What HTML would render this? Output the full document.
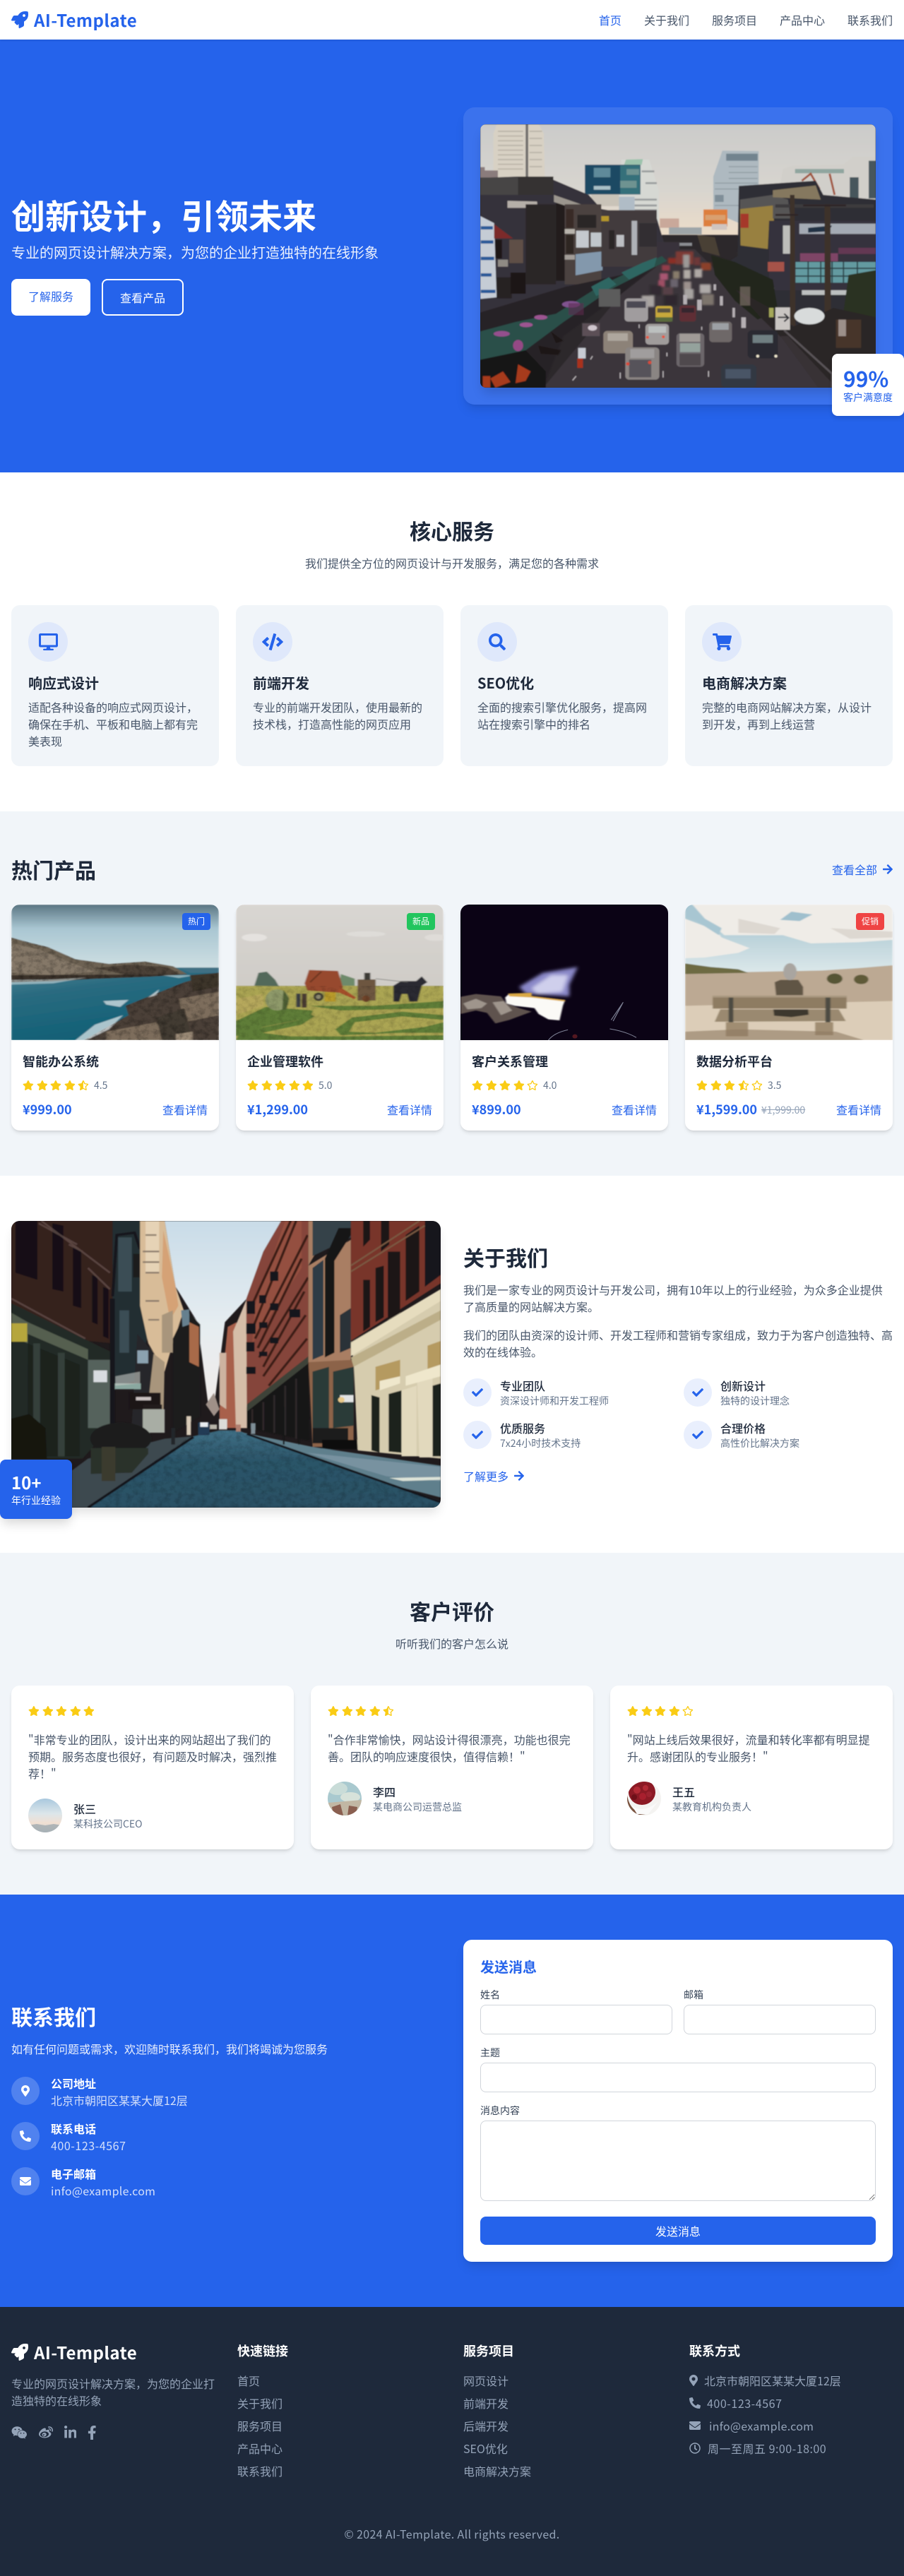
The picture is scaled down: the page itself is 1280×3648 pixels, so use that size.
<!DOCTYPE html>
<html lang="zh-CN"><head><meta charset="utf-8"><title>AI-Template</title>
<style>
*{box-sizing:border-box;margin:0;padding:0}
html,body{width:1280px;background:#fff}
body{height:3648px;overflow:hidden;position:relative;font-family:"Noto Sans CJK SC","Liberation Sans",sans-serif;font-size:16px;line-height:24px;color:#1e293b}
svg{display:block}
.ic{display:inline-block;fill:currentColor;flex:none}
section,header,footer{position:absolute;left:0;width:1280px}
.abs{position:absolute}
header{top:0;height:56px;background:#fff;box-shadow:0 1px 3px rgba(0,0,0,.12);z-index:5}
.logo{position:absolute;left:16px;top:10px;height:36px;display:flex;align-items:center;font-size:24px;line-height:36px;font-weight:700;color:#2563eb;letter-spacing:.45px}
.logo svg{width:24px;height:24px;margin-right:8px}
nav{position:absolute;right:16px;top:16px;display:flex;gap:32px;color:#475569}
.hero{top:56px;height:613px;background:#2563eb;color:#fff}
h1{position:absolute;left:16px;top:223px;font-size:48px;line-height:48px;font-weight:700}
.hero p{position:absolute;left:16px;top:287px;font-size:20px;line-height:28px;opacity:.9}
.btn{position:absolute;top:339px;height:52px;border-radius:8px}
.panel{position:absolute;left:656px;top:96px;width:608px;height:421px;background:rgba(255,255,255,.1);border-radius:16px;box-shadow:0 10px 15px -3px rgba(0,0,0,.1),0 4px 6px -4px rgba(0,0,0,.1)}
.pimg{position:absolute;left:24px;top:24px;width:560px;height:373px;border-radius:8px;overflow:hidden;box-shadow:0 10px 15px -3px rgba(0,0,0,.15)}
.pimg svg,.pi svg,.ai svg,.av svg{width:100%;height:100%}
.sat{position:absolute;left:1178px;top:445px;width:102px;height:88px;background:#fff;border-radius:8px;padding:16px;box-shadow:0 4px 6px rgba(0,0,0,.1);color:#2563eb;white-space:nowrap}
.sat b{display:block;font-size:30px;line-height:36px}
.sat span{display:block;font-size:14px;line-height:20px}
.st{position:absolute;left:0;width:1280px;text-align:center;font-size:30px;line-height:36px;font-weight:700}
.ss{position:absolute;left:0;width:1280px;text-align:center;color:#475569}
.serv{top:669px;height:480px;background:#fff}
.sc{position:absolute;top:188px;width:294px;height:228px;background:#f1f5f9;border-radius:12px}
.si{position:absolute;left:24px;top:24px;width:56px;height:56px;border-radius:50%;background:#dfe8fb;color:#2563eb;display:flex;align-items:center;justify-content:center}
.sc h3{position:absolute;left:24px;top:96px;font-size:20px;line-height:28px;font-weight:700}
.sc p{position:absolute;left:24px;top:132px;width:246px;font-size:16px;line-height:24px;color:#475569}
.prod{top:1149px;height:516px;background:#f1f5f9}
.pc{position:absolute;top:132px;width:294px;height:320px;background:#fff;border-radius:12px;overflow:hidden;box-shadow:0 4px 6px -1px rgba(0,0,0,.1),0 2px 4px -2px rgba(0,0,0,.1)}
.pi{position:absolute;left:0;top:0;width:294px;height:192px}
.tag{position:absolute;right:12px;top:12px;width:40px;height:24px;border-radius:4px;color:#fff;font-size:12px;line-height:24px;text-align:center}
.pc h3{position:absolute;left:16px;top:208px;font-size:18px;line-height:28px;font-weight:600;color:#1e293b}
.rate{position:absolute;left:16px;top:244px;height:24px;display:flex;align-items:center;color:#facc15;fill:#facc15}
.rate svg{height:14px;margin-right:3.85px;fill:#facc15}
.rate i{font-style:normal;color:#64748b;font-size:14px;margin-left:3px;line-height:24px}
.pr{position:absolute;left:16px;top:276px;font-size:18px;line-height:28px;font-weight:700;color:#2563eb}
.old{position:absolute;left:108px;top:279px;font-size:14px;line-height:24px;color:#94a3b8;text-decoration:line-through}
.dt{position:absolute;right:16px;top:278px;color:#2563eb}
.about{top:1665px;height:534px;background:#fff}
.ai{position:absolute;left:16px;top:64px;width:608px;height:406px;border-radius:12px;overflow:hidden;box-shadow:0 10px 15px -3px rgba(0,0,0,.12)}
.yr{position:absolute;left:0;top:402px;width:102px;height:84px;background:#2563eb;color:#fff;border-radius:8px;padding:16px;white-space:nowrap;box-shadow:0 10px 15px -3px rgba(0,0,0,.15)}
.yr b{display:block;font-size:24px;line-height:32px}
.yr span{display:block;font-size:14px;line-height:20px}
.about h2{position:absolute;left:656px;top:97px;font-size:30px;line-height:36px;font-weight:700}
.ap{position:absolute;left:656px;width:608px;color:#475569}
.ft{position:absolute;width:280px;height:44px}
.ft u{position:absolute;left:0;top:2px;width:40px;height:40px;border-radius:50%;background:#e9effd;color:#2563eb;display:flex;align-items:center;justify-content:center}
.ft b{position:absolute;left:52px;top:0;font-weight:500;white-space:nowrap}
.ft span{position:absolute;left:52px;top:24px;font-size:14px;line-height:20px;color:#64748b;white-space:nowrap}
.lnk{position:absolute;display:flex;align-items:center;color:#2563eb}
.lnk svg{margin-left:8px}
.tes{top:2199px;height:484px;background:#f1f5f9}
.tc{position:absolute;top:188px;width:400px;height:232px;background:#fff;border-radius:12px;box-shadow:0 4px 6px -1px rgba(0,0,0,.1),0 2px 4px -2px rgba(0,0,0,.1)}
.tc .rate{left:24px;top:24px}
.tc p{position:absolute;left:24px;top:64px;width:352px;color:#475569}
.av{position:absolute;left:24px;width:48px;height:48px;border-radius:50%;overflow:hidden}
.tc b{position:absolute;left:88px;font-weight:500;white-space:nowrap}
.tc span{position:absolute;left:88px;font-size:14px;line-height:20px;color:#64748b;white-space:nowrap}
.con{top:2683px;height:584px;background:#2563eb;color:#fff}
.con h2{position:absolute;left:16px;top:154px;font-size:30px;line-height:36px;font-weight:700}
.ci{position:absolute;left:16px;width:40px;height:40px;border-radius:50%;background:rgba(255,255,255,.2);display:flex;align-items:center;justify-content:center}
.cb{position:absolute;left:72px;font-weight:600;white-space:nowrap}
.cv{position:absolute;left:72px;opacity:.8;white-space:nowrap}
.form{position:absolute;left:656px;top:64px;width:608px;height:456px;background:#fff;border-radius:12px;box-shadow:0 10px 15px -3px rgba(0,0,0,.1),0 4px 6px -4px rgba(0,0,0,.1);color:#334155}
.form h3{position:absolute;left:24px;top:24px;font-size:20px;line-height:28px;font-weight:700;color:#2563eb}
.form label{position:absolute;font-size:14px;line-height:20px}
.form input,.form textarea{position:absolute;display:block;border:1px solid #d1d5db;border-radius:8px;background:#fff;outline:0;font:inherit}
.form .go{position:absolute;left:24px;top:392px;width:560px;height:40px;background:#2563eb;border-radius:8px;color:#fff;text-align:center;line-height:40px}
footer{top:3267px;height:381px;background:#1e293b;color:#94a3b8}
footer h4{position:absolute;top:48px;font-size:18px;line-height:28px;font-weight:700;color:#fff}
.fl{position:absolute;top:92px;list-style:none}
.fl li{height:32px;white-space:nowrap;display:flex;align-items:flex-start}
.fl li svg{margin-top:4px}
</style></head><body>
<svg width="0" height="0" style="position:absolute"><defs>
<symbol id="rocket" viewBox="0 0 512 512"><path d="M505.12 19.09c-1.19-5.53-6.66-11-12.21-12.19C460.72 0 435.51 0 410.41 0 307.18 0 245.27 55.2 199.05 128H94.84c-16.35.02-35.56 11.88-42.89 26.48L2.52 253.3A28.4 28.4 0 0 0 0 264a24 24 0 0 0 24 24h103.81l-22.47 22.47c-11.37 11.36-13 32.26 0 45.25l50.91 50.91c11.16 11.19 32.16 13.16 45.28 0l22.47-22.47V488a24 24 0 0 0 24 24 28.56 28.56 0 0 0 10.71-2.52l98.73-49.39c14.63-7.3 26.51-26.5 26.51-42.86V312.8c72.6-46.31 128.03-108.41 128.03-211.09.03-25.21.03-50.41-6.88-82.62zM384.04 168a40 40 0 1 1 40.01-40 40 40 0 0 1-40.01 40z"/></symbol>
<symbol id="s" viewBox="0 0 576 512"><path d="M259.3 17.8L194 150.2 47.9 171.5c-26.2 3.8-36.7 36.1-17.7 54.6l105.7 103-25 145.5c-4.5 26.3 23.2 46 46.4 33.7L288 439.6l130.7 68.7c23.2 12.2 50.9-7.4 46.4-33.7l-25-145.5 105.7-103c19-18.5 8.5-50.8-17.7-54.6L382 150.2 316.7 17.8c-11.7-23.6-45.6-23.9-57.4 0z"/></symbol>
<symbol id="h" viewBox="0 0 536 512"><path d="M508.55 171.51L362.18 150.2 296.77 17.81C290.89 5.98 279.42 0 267.95 0c-11.4 0-22.79 5.9-28.69 17.81l-65.43 132.38-146.38 21.29c-26.25 3.8-36.77 36.09-17.74 54.59l105.89 103-25.06 145.48C86.98 495.33 103.57 512 122.15 512c4.93 0 10-1.17 14.87-3.75l130.95-68.68 130.94 68.7c4.86 2.55 9.92 3.71 14.83 3.71 18.6 0 35.22-16.61 31.66-37.4l-25.03-145.49 105.91-102.98c19.04-18.5 8.52-50.8-17.73-54.6zm-121.74 123.2l-18.12 17.62 4.28 24.88 19.52 113.45-102.13-53.59-22.38-11.74.03-317.19 51.03 103.29 11.18 22.63 25.01 3.64 114.23 16.63-82.65 80.38z"/></symbol>
<symbol id="e" viewBox="0 0 576 512"><path d="M528.1 171.5L382 150.2 316.7 17.8c-11.7-23.6-45.6-23.9-57.4 0L194 150.2 47.9 171.5c-26.2 3.8-36.7 36.1-17.7 54.6l105.7 103-25 145.5c-4.5 26.3 23.2 46 46.4 33.7L288 439.6l130.7 68.7c23.2 12.2 50.9-7.4 46.4-33.7l-25-145.5 105.7-103c19.1-18.5 8.6-50.8-17.7-54.6zM388.6 312.3l23.7 138.4L288 385.4l-124.3 65.3 23.7-138.4-100.6-98 139-20.2 62.2-126 62.2 126 139 20.2-100.6 98z"/></symbol>
<symbol id="ar" viewBox="0 0 448 512"><path d="M190.5 66.9l22.2-22.2c9.4-9.4 24.6-9.4 33.9 0L441 239c9.4 9.4 9.4 24.6 0 33.9L246.6 467.3c-9.4 9.4-24.6 9.4-33.9 0l-22.2-22.2c-9.5-9.5-9.3-25 .4-34.3L311.4 296H24c-13.3 0-24-10.7-24-24v-32c0-13.3 10.7-24 24-24h287.4L190.9 101.2c-9.8-9.3-10-24.8-.4-34.3z"/></symbol>
<symbol id="ck" viewBox="0 0 512 512"><path d="M173.9 439.4l-166.4-166.4c-10-10-10-26.2 0-36.2l36.2-36.2c10-10 26.2-10 36.2 0L192 312.69 432.1 72.6c10-10 26.2-10 36.2 0l36.2 36.2c10 10 10 26.2 0 36.2l-294.4 294.4c-10 10-26.2 10-36.2 0z"/></symbol>
<symbol id="pin" viewBox="0 0 384 512"><path d="M172.27 501.67C26.97 291.03 0 269.41 0 192 0 85.96 85.96 0 192 0s192 85.96 192 192c0 77.41-26.97 99.03-172.27 309.67-9.53 13.77-29.93 13.77-39.46 0zM192 272c44.18 0 80-35.82 80-80s-35.82-80-80-80-80 35.82-80 80 35.82 80 80 80z"/></symbol>
<symbol id="ph" viewBox="0 0 512 512"><path d="M497.39 361.8l-112-48a24 24 0 0 0-28 6.9l-49.6 60.6A370.66 370.66 0 0 1 130.6 204.11l60.6-49.6a23.94 23.94 0 0 0 6.9-28l-48-112A24.16 24.16 0 0 0 122.6.61l-104 24A24 24 0 0 0 0 48c0 256.5 207.9 464 464 464a24 24 0 0 0 23.4-18.6l24-104a24.29 24.29 0 0 0-14.01-27.6z"/></symbol>
<symbol id="env" viewBox="0 0 512 512"><path d="M502.3 190.8c3.9-3.1 9.7-.2 9.7 4.7V400c0 26.5-21.5 48-48 48H48c-26.5 0-48-21.5-48-48V195.6c0-5 5.7-7.8 9.7-4.7 22.4 17.4 52.1 39.5 154.1 113.6 21.1 15.4 56.7 47.8 92.2 47.6 35.7.3 72-32.8 92.3-47.6 102-74.1 131.6-96.3 154-113.7zM256 320c23.2.4 56.6-29.2 73.4-41.4 132.7-96.3 142.8-104.7 173.4-128.7 5.8-4.5 9.2-11.5 9.2-18.9v-19c0-26.5-21.5-48-48-48H48C21.5 64 0 85.5 0 112v19c0 7.4 3.4 14.3 9.2 18.9 30.6 23.9 40.7 32.4 173.4 128.7 16.8 12.2 50.2 41.8 73.4 41.4z"/></symbol>
<filter id="b1" x="-5%" y="-5%" width="110%" height="110%"><feGaussianBlur stdDeviation="2.4"/></filter>
<filter id="b2" x="-5%" y="-5%" width="110%" height="110%"><feGaussianBlur stdDeviation="3.4"/></filter>
<filter id="b3" x="-20%" y="-20%" width="140%" height="140%"><feGaussianBlur stdDeviation="7"/></filter>
<filter id="tx" x="0" y="0" width="100%" height="100%"><feTurbulence type="fractalNoise" baseFrequency=".045" numOctaves="4" seed="4"/><feColorMatrix values="0 0 0 0 0 0 0 0 0 0 0 0 0 0 0 0 0 0 2 -.8"/><feComposite in2="SourceAlpha" operator="in"/></filter>
<linearGradient id="g1" x1="0" y1="0" x2="0" y2="1"><stop offset="0" stop-color="#cbcbca"/><stop offset=".6" stop-color="#d8d5cf"/><stop offset="1" stop-color="#ecdcc8"/></linearGradient>
<linearGradient id="g2" x1="0" y1="0" x2="0" y2="1"><stop offset="0" stop-color="#c9dce8"/><stop offset=".55" stop-color="#e6edf1"/><stop offset="1" stop-color="#f2ecea"/></linearGradient>
<linearGradient id="g3" x1="0" y1="0" x2="0" y2="1"><stop offset="0" stop-color="#3f6f85"/><stop offset=".4" stop-color="#2b5468"/><stop offset="1" stop-color="#2a5064"/></linearGradient>
<linearGradient id="g4" x1="0" y1="0" x2="0" y2="1"><stop offset="0" stop-color="#5b7683"/><stop offset=".35" stop-color="#a9c6d2"/><stop offset="1" stop-color="#d3e2e5"/></linearGradient>
<linearGradient id="g5" x1="0" y1="0" x2=".4" y2="1"><stop offset="0" stop-color="#4f8596"/><stop offset=".35" stop-color="#2a6b80"/><stop offset="1" stop-color="#0f5f75"/></linearGradient>
<linearGradient id="g6" x1="0" y1="0" x2="0" y2="1"><stop offset="0" stop-color="#d9d6d2"/><stop offset="1" stop-color="#cfccc7"/></linearGradient>
<linearGradient id="g7" x1="0" y1="0" x2="0" y2="1"><stop offset="0" stop-color="#9dbfcc"/><stop offset="1" stop-color="#dce8ea"/></linearGradient>
</defs></svg>

<header>
<div class="logo"><svg class="ic"><use href="#rocket"/></svg>AI-Template</div>
<nav><span style="color:#2563eb">首页</span><span>关于我们</span><span>服务项目</span><span>产品中心</span><span>联系我们</span></nav>
</header>

<section class="hero">
<h1>创新设计，引领未来</h1>
<p>专业的网页设计解决方案，为您的企业打造独特的在线形象</p>
<div class="btn" style="left:16px;width:112px;background:#fff;color:#2563eb;padding:12px 24px">了解服务</div>
<div class="btn" style="left:144px;width:116px;border:2px solid #fff;padding:12px 24px">查看产品</div>
<div class="panel"><div class="pimg">
<svg viewBox="0 0 1568 1119" preserveAspectRatio="none"><rect width="1568" height="1119" fill="#2c282b"/><g filter="url(#b1)">
<rect width="1568" height="470" fill="url(#g1)"/>
<path d="M52 40 66 0H232L252 40 256 235H52Z" fill="#d8d1c4"/>
<path d="M70 30H170M70 50H170M70 70H170M70 90H170M70 110H170M70 130H170M70 150H170M70 170H170M70 190H170M195 30H245M195 60H245M195 90H245M195 120H245M195 150H245M195 180H245" stroke="#b9b2a6" stroke-width="5"/>
<rect x="180" y="0" width="10" height="225" fill="#6f6d6c"/>
<path d="M0 182H18V228H0ZM18 196H70V228H18Z" fill="#8a7c7c"/>
<path d="M560 150 670 150 708 280 708 420 600 400 550 300Z" fill="#d6d8d3"/>
<path d="M612 320H700M612 345H700M612 365H700M640 200H690M655 250H700" stroke="#6f7378" stroke-width="8" opacity=".6"/>
<path d="M578 150 645 148 640 172H570Z" fill="#9cc3ac"/>
<rect x="415" y="172" width="220" height="126" fill="#1e4a63"/>
<rect x="555" y="175" width="78" height="122" fill="#35707a"/><rect x="450" y="185" width="66" height="40" fill="#5f8a9a"/><rect x="450" y="262" width="66" height="16" fill="#a9c0c7"/>
<path d="M580 190H630V215H580ZM555 240H620V270H555Z" fill="#a8b5a8" opacity=".5"/>
<rect x="440" y="298" width="110" height="50" fill="#c9c3b8"/>
<rect x="550" y="308" width="62" height="60" fill="#b0bcc6"/>
<path d="M712 400H788V440H712Z" fill="#c9a89a"/>
<rect x="748" y="438" width="130" height="30" fill="#9ea5a8"/>
<rect x="770" y="503" width="70" height="14" fill="#8a8d92"/>
<path d="M924 222 960 112 1104 114 1104 262 1030 262 1026 420 924 372Z" fill="#aeb9c0"/>
<path d="M975 125H1100V155H975Z" fill="#72838e"/><path d="M930 300H965V330H930Z" fill="#7f8e98"/>
<path d="M930 250H1100M930 275H1040M930 345H1026M985 180H1100M985 205H1100M985 230H1100" stroke="#8e9ba3" stroke-width="4"/>
<path d="M1190 250 1200 190 1240 175 1440 170 1480 137 1568 137 1568 330 1190 330Z" fill="#d1cfca"/>
<path d="M1248 190H1442V208H1248Z" fill="#8fa59f"/><path d="M1540 155H1568V315H1540ZM1465 225H1500V315H1465Z" fill="#47565c"/>
<path d="M1275 240 1310 210 1345 275M1385 210 1405 300" stroke="#a0523a" stroke-width="8" fill="none"/>
<path d="M1025 262 1120 255 1330 240 1360 300 1568 320 1568 1119 1100 1119 1000 700 900 640 1020 560Z" fill="#2f2d34"/>
<path d="M1030 360 1160 340 1165 420 1145 420 1140 530 1032 515Z" fill="#98803f"/>
<path d="M1030 320 1160 300 1220 320 1230 400 1160 400 1160 345 1030 360Z" fill="#565555"/>
<path d="M1160 280 1330 260 1350 320 1160 310Z" fill="#85785e"/>
<rect x="1032" y="380" width="32" height="60" fill="#a5392c"/>
<rect x="1145" y="410" width="423" height="295" fill="#36313c"/>
<rect x="1265" y="422" width="303" height="44" fill="#a4aab4"/>
<path d="M1300 440 1395 430 1380 455 1300 460Z" fill="#243245"/>
<rect x="1200" y="430" width="28" height="120" fill="#bdbdba"/>
<rect x="1268" y="548" width="150" height="34" fill="#7e4466"/><rect x="1420" y="525" width="148" height="26" fill="#633852"/>
<rect x="1250" y="585" width="318" height="88" fill="#639aa0"/>
<path d="M1300 585V673M1350 585V673M1395 585V673M1440 585V673M1495 585V673M1250 612H1568M1250 645H1568" stroke="#2b4045" stroke-width="5"/>
<rect x="1140" y="585" width="65" height="40" fill="#a5524a"/>
<rect x="1275" y="705" width="200" height="20" fill="#bdc0c0"/>
<path d="M1460 640 1568 620 1568 860 1440 800Z" fill="#2a3021"/>
<rect x="1170" y="340" width="390" height="14" fill="#3c3a3e"/>
<path d="M1365 340H1388L1392 1020 1365 1000ZM1228 300H1246L1250 860 1228 850Z" fill="#3e302b"/>
<path d="M1280 345H1450M1170 385H1260" stroke="#2d2628" stroke-width="8"/>
<rect x="1140" y="695" width="26" height="44" fill="#a8b8a8"/>
<rect x="885" y="362" width="95" height="72" fill="#dd7f3c"/><rect x="892" y="385" width="80" height="22" fill="#d9a070"/>
<rect x="918" y="424" width="60" height="24" fill="#cfc5c0"/>
<path d="M0 228 150 222 290 236 430 300 480 360 700 400 745 560 560 640 340 690 0 800Z" fill="#36303a"/>
<path d="M0 226H150V300H0Z" fill="#464444"/><path d="M150 222H290V300H150Z" fill="#363333"/>
<path d="M108 325 225 328 228 355 108 355Z" fill="#b5afa8"/>
<path d="M0 390 55 420 65 735 0 742Z" fill="#c5ccd5"/>
<path d="M2 440H50M2 500H52M2 570H55M2 640H45M2 710H60" stroke="#2a5a98" stroke-width="14"/>
<path d="M55 425 130 485H55Z" fill="#7b2b2b"/>
<rect x="60" y="490" width="26" height="80" fill="#1a1515"/><rect x="115" y="490" width="55" height="100" fill="#5f4f46"/><rect x="65" y="650" width="60" height="90" fill="#262022"/><rect x="120" y="630" width="60" height="90" fill="#1c1819"/><rect x="70" y="575" width="40" height="30" fill="#8f8a84"/>
<rect x="180" y="340" width="120" height="340" fill="#2a2628"/><rect x="300" y="335" width="35" height="330" fill="#201c1f"/>
<path d="M292 300 480 370 480 400 335 345 292 330Z" fill="#9b968e"/>
<rect x="335" y="340" width="145" height="340" fill="#4c4240"/>
<rect x="335" y="445" width="40" height="20" fill="#b8b3ac"/><rect x="335" y="555" width="40" height="20" fill="#a39d98"/>
<rect x="340" y="360" width="30" height="80" fill="#382a27"/><rect x="340" y="470" width="30" height="80" fill="#2f2523"/><rect x="385" y="385" width="75" height="55" fill="#2a2628"/>
<rect x="380" y="452" width="50" height="72" fill="#c5c9ce"/><rect x="438" y="460" width="44" height="60" fill="#c0c6cb"/><path d="M378 552 485 540 485 620 378 642Z" fill="#8398ac"/>
<rect x="480" y="365" width="220" height="240" fill="#423b3c"/><rect x="540" y="470" width="30" height="50" fill="#bdbfc3"/><rect x="600" y="410" width="22" height="145" fill="#aeb1b6"/><rect x="480" y="390" width="30" height="22" fill="#b5962a"/><rect x="510" y="450" width="22" height="80" fill="#2a2628"/><rect x="630" y="420" width="70" height="100" fill="#332e30"/>
<path d="M700 500 790 500 790 560 700 600Z" fill="#38323a"/><path d="M860 470 930 480 950 560 880 540Z" fill="#4a3f34"/>
<path d="M790 530 850 530 1000 690 1400 1119 250 1119 560 720Z" fill="#3a343a"/>
<path d="M0 800 340 690 560 640 730 570 560 720 330 900 250 1119H0Z" fill="#262125"/>
<path d="M915 555 1010 585 1160 660 1180 790 1100 830 1010 750 930 640Z" fill="#23251e"/>
<path d="M1010 700 1120 830 1400 1119 1568 1119 1568 820 1400 780 1240 860 1180 800Z" fill="#2a2525"/>
<path d="M1220 900 1395 1100 1395 1119 1340 1119 1190 900Z" fill="#383335"/><path d="M1205 875 1395 1060 1395 1119" stroke="#5a5558" stroke-width="8" fill="none"/>
<rect x="1170" y="778" width="58" height="95" fill="#c9c5c2"/><path d="M1180 820H1220M1205 805 1222 822 1205 838" stroke="#2c2c30" stroke-width="6" fill="none"/>
<ellipse cx="1305" cy="815" rx="60" ry="35" fill="#d8dbdb"/><rect x="1410" y="830" width="100" height="120" fill="#5c4030" opacity=".6"/>
<path d="M0 880 140 840 300 805 470 690 720 560 740 580 520 700 330 840 180 960 0 1010Z" fill="#2a4f4a"/>
<path d="M560 630 640 590 700 565 690 605 590 660ZM440 690 510 650 540 680 460 730Z" fill="#2f6662"/>
<ellipse cx="85" cy="890" rx="32" ry="12" fill="#94508e"/><ellipse cx="182" cy="852" rx="26" ry="10" fill="#9c5491"/><ellipse cx="240" cy="820" rx="26" ry="10" fill="#9c5491"/><ellipse cx="150" cy="940" rx="20" ry="24" fill="#944a85"/><ellipse cx="360" cy="765" rx="36" ry="14" fill="#80528f"/>
<rect x="350" y="760" width="60" height="50" fill="#5d2c50" opacity=".6"/>
<path d="M0 1000 180 960 260 1050 260 1119H0Z" fill="#181417"/>
<path d="M40 1080 90 1050 120 1095 60 1119ZM150 1020 200 1050 180 1090 140 1100ZM10 1070H40V1119H10Z" fill="#a63a1c"/>
<path d="M230 940 320 960 310 980 240 975ZM280 880 330 920 300 930Z" fill="#1e1719"/>
<rect x="388" y="950" width="30" height="45" fill="#c7cbd3"/><rect x="385" y="995" width="22" height="40" fill="#a9301f"/>
<rect x="404" y="845" width="70" height="55" fill="#5c5056"/><ellipse cx="445" cy="865" rx="18" ry="12" fill="#d0c6cd"/>
<rect x="470" y="700" width="85" height="75" fill="#5c5c5c"/>
<g filter="url(#b2)" opacity=".8">
<rect x="775" y="540" width="70" height="55" fill="#8f3d36"/><rect x="805" y="555" width="24" height="55" fill="#b5b3af"/><rect x="745" y="568" width="30" height="24" fill="#a02d24"/><rect x="848" y="565" width="24" height="34" fill="#7a3838"/><rect x="875" y="588" width="40" height="32" fill="#a04426"/>
<rect x="720" y="598" width="32" height="24" fill="#a84050"/><rect x="712" y="633" width="32" height="28" fill="#c56080"/><rect x="764" y="624" width="26" height="32" fill="#9c8f78"/><rect x="806" y="618" width="28" height="38" fill="#cfc9c0"/><rect x="849" y="615" width="30" height="36" fill="#cdc6bf"/><rect x="754" y="658" width="30" height="34" fill="#77707a"/><rect x="806" y="668" width="30" height="34" fill="#b5a9a2"/><rect x="706" y="662" width="26" height="28" fill="#b9566f"/>
<rect x="672" y="684" width="46" height="42" fill="#2d2a2e"/><rect x="724" y="692" width="40" height="32" fill="#5e4548"/><rect x="808" y="700" width="38" height="42" fill="#c3bfbb"/><rect x="870" y="680" width="44" height="38" fill="#ccc8c4"/><rect x="640" y="728" width="50" height="48" fill="#c5c0bb"/><rect x="728" y="724" width="54" height="46" fill="#2a282c"/><rect x="878" y="722" width="48" height="46" fill="#8e857a"/>
</g>
<rect x="572" y="740" width="93" height="98" rx="14" fill="#a09c9e"/><rect x="580" y="752" width="76" height="28" fill="#4c4a52"/>
<rect x="695" y="772" width="67" height="66" rx="10" fill="#c7a83a"/><rect x="702" y="782" width="52" height="18" fill="#5a5340"/><rect x="695" y="820" width="67" height="18" fill="#586a3c"/>
<rect x="790" y="770" width="65" height="68" rx="10" fill="#5e2f34"/><rect x="798" y="780" width="50" height="20" fill="#35282e"/>
<rect x="908" y="838" width="90" height="88" rx="14" fill="#6e6868"/><rect x="920" y="845" width="65" height="28" fill="#9da0a4"/>
<rect x="655" y="848" width="93" height="88" rx="14" fill="#a09c9b"/><rect x="667" y="858" width="70" height="28" fill="#bcc0bf"/><circle cx="663" cy="905" r="6" fill="#e6523c"/><circle cx="726" cy="903" r="6" fill="#e6523c"/>
<rect x="488" y="878" width="117" height="95" rx="16" fill="#8c8278"/><rect x="505" y="888" width="80" height="32" fill="#aea79e"/>
<rect x="778" y="888" width="110" height="142" rx="14" fill="#6c666a"/><rect x="792" y="930" width="80" height="38" fill="#94a29c"/><rect x="790" y="890" width="82" height="34" fill="#a09b97"/><rect x="790" y="975" width="84" height="50" fill="#4f4a4e"/>
<rect x="575" y="948" width="135" height="137" rx="16" fill="#8a8583"/><rect x="595" y="955" width="95" height="38" fill="#a09d9d"/><rect x="590" y="1000" width="88" height="75" fill="#56525a"/><circle cx="585" cy="1018" r="7" fill="#d94a38"/><circle cx="672" cy="1012" r="7" fill="#d94a38"/>
<rect x="1060" y="875" width="120" height="120" rx="18" fill="#2a2b33"/><rect x="1080" y="895" width="80" height="34" fill="#6f7f82"/><circle cx="1100" cy="985" r="6" fill="#f0e8d0"/><circle cx="1172" cy="985" r="6" fill="#f0e8d0"/>
<rect x="955" y="1020" width="140" height="99" rx="18" fill="#333843"/><rect x="972" y="1040" width="100" height="40" fill="#4a5566"/>
<path d="M1000 780h10v40h-10zM1035 820h18v45h-18zM950 730h12v40h-12zM860 745h18v45h-18zM805 725h15v40h-15zM925 680h10v25h-10z" fill="#b5afb3"/>
<path d="M725 1048v28M555 1055v25M905 1048v25M740 970v16M630 850v16M878 860v14M445 985l-8 14M380 1070l-14 18" stroke="#bfbabd" stroke-width="4"/>
<rect x="1030" y="690" width="40" height="80" fill="#b8a898" opacity=".4"/>
<rect x="1145" y="780" width="18" height="40" fill="#a5a85a"/>
<rect x="1420" y="830" width="30" height="70" fill="#c0b8b4" opacity=".7"/>
</g></svg>
</div></div>
<div class="sat"><b>99%</b><span>客户满意度</span></div>
</section>

<section class="serv">
<div class="st" style="top:64px">核心服务</div>
<div class="ss" style="top:116px">我们提供全方位的网页设计与开发服务，满足您的各种需求</div>
<div class="sc" style="left:16px"><div class="si"><svg class="ic" width="27" height="24" viewBox="0 0 576 512"><path d="M528 0H48C21.5 0 0 21.5 0 48v320c0 26.5 21.5 48 48 48h192l-16 48h-72c-13.3 0-24 10.7-24 24s10.7 24 24 24h272c13.3 0 24-10.7 24-24s-10.7-24-24-24h-72l-16-48h192c26.5 0 48-21.5 48-48V48c0-26.5-21.5-48-48-48zm-16 352H64V64h448v288z"/></svg></div><h3>响应式设计</h3><p>适配各种设备的响应式网页设计，确保在手机、平板和电脑上都有完美表现</p></div>
<div class="sc" style="left:334px"><div class="si"><svg class="ic" width="30" height="24" viewBox="0 0 640 512"><path d="M278.9 511.5l-61-17.7c-6.4-1.8-10-8.5-8.2-14.9L346.2 8.7c1.8-6.4 8.5-10 14.9-8.2l61 17.7c6.4 1.8 10 8.5 8.2 14.9L293.8 503.3c-1.9 6.4-8.5 10.1-14.9 8.2zm-114-112.2l43.5-46.4c4.6-4.9 4.3-12.7-.8-17.2L117 256l90.6-79.7c5.1-4.5 5.5-12.3.8-17.2l-43.5-46.4c-4.5-4.8-12.1-5.1-17-.5L3.8 247.2c-5.1 4.7-5.1 12.8 0 17.5l144.1 135.1c4.9 4.6 12.5 4.4 17-.5zm327.2.6l144.1-135.1c5.1-4.7 5.1-12.8 0-17.5L492.1 112.1c-4.8-4.5-12.4-4.3-17 .5L431.6 159c-4.6 4.9-4.3 12.7.8 17.2L523 256l-90.6 79.7c-5.1 4.5-5.5 12.3-.8 17.2l43.5 46.4c4.5 4.9 12.1 5.1 17 .6z"/></svg></div><h3>前端开发</h3><p>专业的前端开发团队，使用最新的技术栈，打造高性能的网页应用</p></div>
<div class="sc" style="left:652px"><div class="si"><svg class="ic" width="24" height="24" viewBox="0 0 512 512"><path d="M505 442.7L405.3 343c-4.5-4.5-10.6-7-17-7H372c27.6-35.3 44-79.7 44-128C416 93.1 322.9 0 208 0S0 93.1 0 208s93.1 208 208 208c48.3 0 92.7-16.4 128-44v16.3c0 6.4 2.5 12.5 7 17l99.7 99.7c9.4 9.4 24.6 9.4 33.9 0l28.3-28.3c9.4-9.4 9.4-24.6.1-34zM208 336c-70.7 0-128-57.2-128-128 0-70.7 57.2-128 128-128 70.7 0 128 57.2 128 128 0 70.7-57.2 128-128 128z"/></svg></div><h3>SEO优化</h3><p>全面的搜索引擎优化服务，提高网站在搜索引擎中的排名</p></div>
<div class="sc" style="left:970px"><div class="si"><svg class="ic" width="27" height="24" viewBox="0 0 576 512"><path d="M528.12 301.319l47.273-208C578.806 78.301 567.391 64 551.99 64H159.208l-9.166-44.81C147.758 8.021 137.93 0 126.529 0H24C10.745 0 0 10.745 0 24v16c0 13.255 10.745 24 24 24h69.883l70.248 343.435C147.325 417.1 136 435.222 136 456c0 30.928 25.072 56 56 56s56-25.072 56-56c0-15.674-6.447-29.835-16.824-40h209.647C430.447 426.165 424 440.326 424 456c0 30.928 25.072 56 56 56s56-25.072 56-56c0-22.172-12.888-41.332-31.579-50.405l5.517-24.276c3.413-15.018-8.002-29.319-23.403-29.319H218.117l-6.545-32h293.145c11.206 0 20.92-7.754 23.403-18.681z"/></svg></div><h3>电商解决方案</h3><p>完整的电商网站解决方案，从设计到开发，再到上线运营</p></div>
</section>

<section class="prod">
<div class="abs" style="left:16px;top:64px;font-size:30px;line-height:36px;font-weight:700">热门产品</div>
<div class="lnk" style="right:16px;top:70px">查看全部<svg class="ic" width="14" height="16"><use href="#ar"/></svg></div>

<div class="pc" style="left:16px"><div class="pi"><svg viewBox="0 0 744 576" preserveAspectRatio="none"><g filter="url(#b1)">
<rect width="744" height="290" fill="url(#g4)"/>
<rect y="268" width="744" height="308" fill="url(#g5)"/>
<path d="M600 268H744V290H640Z" fill="#3f6f84"/>
<path d="M0 140 60 160 130 180 230 232 350 252 480 242 580 262 630 296 500 306 280 316 150 326 0 330Z" fill="#6d6253"/>
<path d="M0 165 100 190 220 250 300 285 150 300 0 290Z" fill="#857868"/><path d="M300 270 420 255 560 265 600 295 420 300Z" fill="#4d4338"/>
<path d="M0 300 630 296 500 306 280 316 150 326 0 330Z" fill="#3a332c"/>
<path d="M0 320 150 318 270 310 150 335 0 340ZM540 300 660 300 600 312Z" fill="#d8e3e6" opacity=".55"/>
<path d="M744 288 620 330 490 392 410 430 420 470 330 530 260 576H744Z" fill="#4c4138"/>
<path d="M600 400 744 370V470L620 500ZM340 540 520 500 560 576H340Z" fill="#7d6d5c"/><path d="M520 480 620 440 650 576H540Z" fill="#433a30"/><path d="M640 300 744 290V350L650 370Z" fill="#3e342c"/><path d="M590 550 650 540 650 576H590Z" fill="#9d8c78"/>
<path d="M330 410 420 405 390 435 340 425ZM490 395 530 360 520 385ZM230 576 300 510 400 470 350 530 270 576Z" fill="#dde6e8" opacity=".75"/>
</g><path d="M0 140 130 180 230 232 350 252 480 242 630 296 500 306 0 330ZM744 288 620 330 490 392 410 430 420 470 330 530 260 576H744Z" filter="url(#tx)" opacity=".3"/></svg></div><div class="tag" style="background:#2563eb">热门</div>
<h3>智能办公系统</h3><div class="rate"><svg width="15.75"><use href="#s"/></svg><svg width="15.75"><use href="#s"/></svg><svg width="15.75"><use href="#s"/></svg><svg width="15.75"><use href="#s"/></svg><svg width="15.75"><use href="#h"/></svg><i>4.5</i></div>
<div class="pr">¥999.00</div><div class="dt">查看详情</div></div>

<div class="pc" style="left:334px"><div class="pi"><svg viewBox="804 0 744 576" preserveAspectRatio="none"><g filter="url(#b1)">
<rect x="804" width="744" height="350" fill="url(#g6)"/>
<ellipse cx="870" cy="140" rx="45" ry="16" fill="#e5e2df"/><ellipse cx="1270" cy="125" rx="70" ry="12" fill="#dedcd8"/><ellipse cx="1520" cy="140" rx="40" ry="14" fill="#dfdcd8"/>
<rect x="804" y="345" width="744" height="231" fill="#aba553"/>
<path d="M870 345 885 290 915 285 945 320 958 347Z" fill="#53695a"/><path d="M1175 345 1180 295 1230 315 1230 345Z" fill="#6e8a6a"/>
<path d="M804 495 910 435 1080 450 1070 480 900 520 804 560ZM1070 430 1300 430 1548 410 1548 440 1180 450ZM1160 530 1220 480 1400 455 1548 470 1548 490 1400 475 1230 500 1210 540 1300 545 1480 520 1548 500 1548 545 1400 545 1180 555ZM804 576 820 540 950 510 1030 490 1060 460 1085 475 1040 510 900 545 1000 560 1200 560 1548 555 1548 576Z" fill="#5f7d38"/>
<path d="M804 400 900 380 905 430 804 470Z" fill="#baa960" opacity=".7"/>
<ellipse cx="952" cy="405" rx="42" ry="45" fill="#8f9a6a"/><path d="M975 362 995 400 985 448 970 448Z" fill="#4f6036"/>
<path d="M1066 278 1170 282 1187 350 1180 375 1060 365 1050 335Z" fill="#97492d"/><path d="M1070 330 1110 285" stroke="#5e2e1c" stroke-width="5"/>
<circle cx="1100" cy="392" r="18" fill="#3c3a30"/><circle cx="1100" cy="392" r="9" fill="#8d8a70"/><rect x="1122" y="372" width="40" height="40" fill="#b89a2a"/>
<path d="M1180 352 1235 395 1228 402 1170 372Z" fill="#a5502c"/><rect x="1240" y="318" width="65" height="90" fill="#6d5740"/><circle cx="1270" cy="400" r="14" fill="#70452c"/>
<rect x="1264" y="290" width="22" height="30" fill="#3e3a36"/><rect x="1020" y="378" width="16" height="58" fill="#3a3e42"/><rect x="1040" y="378" width="18" height="60" fill="#4a3a32"/>
<path d="M1368 345 1395 325 1450 325 1470 305 1490 330 1470 345 1462 380 1455 412H1425L1418 380 1398 380 1390 412H1368Z" fill="#2b2b30"/><path d="M1305 315 1420 330" stroke="#6a6a66" stroke-width="2"/>
</g><path d="M804 345H1548V576H804Z" filter="url(#tx)" opacity=".16"/></svg></div><div class="tag" style="background:#22c55e">新品</div>
<h3>企业管理软件</h3><div class="rate"><svg width="15.75"><use href="#s"/></svg><svg width="15.75"><use href="#s"/></svg><svg width="15.75"><use href="#s"/></svg><svg width="15.75"><use href="#s"/></svg><svg width="15.75"><use href="#s"/></svg><i>5.0</i></div>
<div class="pr">¥1,299.00</div><div class="dt">查看详情</div></div>

<div class="pc" style="left:652px"><div class="pi"><svg viewBox="5 0 744 576" preserveAspectRatio="none">
<rect x="5" width="744" height="576" fill="#0b0315"/>
<g filter="url(#b3)"><path d="M215 350 300 290 425 265 395 340 395 390 240 380Z" fill="#8a88c8"/><path d="M260 355 330 300 390 300 370 370 280 380Z" fill="#cfcfec"/></g>
<g filter="url(#b1)"><path d="M165 395 180 378 380 405 372 430 360 492 320 488 285 465 270 440 200 430 170 420Z" fill="#fbfaf6"/><path d="M175 378 260 375 260 388 380 405 380 412 260 395 180 390Z" fill="#d9a845"/>
<path d="M5 392 60 380 150 390 170 420 215 440 260 455 180 490 130 505 100 460 60 450 5 465Z" fill="#6e6058" opacity=".85"/><path d="M15 420 60 400 100 420 80 440 30 445ZM120 415 160 410 190 450 150 470Z" fill="#b9b2a8" opacity=".7"/></g>
<path d="M545 490 588 415 552 495M320 576Q340 545 390 532M540 528Q600 540 635 565" stroke="#9aa0b4" stroke-width="3" fill="none" opacity=".8"/>
<circle cx="415" cy="560" r="9" fill="#9a2c2c" opacity=".5"/>
</svg></div>
<h3>客户关系管理</h3><div class="rate"><svg width="15.75"><use href="#s"/></svg><svg width="15.75"><use href="#s"/></svg><svg width="15.75"><use href="#s"/></svg><svg width="15.75"><use href="#s"/></svg><svg width="15.75"><use href="#e"/></svg><i>4.0</i></div>
<div class="pr">¥899.00</div><div class="dt">查看详情</div></div>

<div class="pc" style="left:970px"><div class="pi"><svg viewBox="809 0 744 576" preserveAspectRatio="none"><g filter="url(#b1)">
<rect x="809" width="744" height="290" fill="url(#g7)"/>
<path d="M809 60 920 110 940 140 1040 185 1000 205 880 225 809 228ZM835 0H1553V150L1430 160 1260 165 1160 130 1050 130 950 130 880 60Z" fill="#efece7"/>
<path d="M1150 65 1190 30 1265 42 1220 70Z" fill="#9fbfcd"/><path d="M809 10 835 0 880 60 940 100 930 130 850 70 809 45Z" fill="#a8c6d2"/>
<path d="M1000 60 1150 100 1130 125 1000 120ZM1330 100 1553 115 1553 140 1400 145Z" fill="#d6d0c8" opacity=".7"/>
<path d="M809 288 900 290 1100 285 1300 280 1430 270 1553 258V576H809Z" fill="#bca993"/>
<path d="M809 430 1553 410V576H809Z" fill="#dccdb8"/>
<path d="M809 250 900 265 1000 275 1035 290 809 295Z" fill="#6d6a42"/><ellipse cx="1345" cy="315" rx="28" ry="22" fill="#565535"/><ellipse cx="1440" cy="318" rx="26" ry="20" fill="#5e5a38"/>
<path d="M1130 330 1150 320 1215 320 1232 350 1232 385H1135Z" fill="#605545"/>
<ellipse cx="1185" cy="285" rx="24" ry="36" fill="#a9a5a0"/>
<rect x="908" y="387" width="480" height="55" fill="#8e7b62"/><rect x="908" y="387" width="480" height="8" fill="#a8977f"/>
<path d="M935 445 1360 445 1385 495 915 498Z" fill="#9a8970" /><path d="M1125 445H1250L1252 468 1190 478 1128 472Z" fill="#3e382f"/>
<path d="M965 395H982V510H965ZM1312 395H1330V505H1312Z" fill="#4d4c42"/><path d="M955 500H1035V560H955ZM1275 500H1340V555H1275Z" fill="#a08d72"/>
<path d="M809 540 1000 530 1350 540 1450 576H809Z" fill="#8d7a60" opacity=".6"/>
</g></svg></div><div class="tag" style="background:#ef4444">促销</div>
<h3>数据分析平台</h3><div class="rate"><svg width="15.75"><use href="#s"/></svg><svg width="15.75"><use href="#s"/></svg><svg width="15.75"><use href="#s"/></svg><svg width="15.75"><use href="#h"/></svg><svg width="15.75"><use href="#e"/></svg><i>3.5</i></div>
<div class="pr">¥1,599.00</div><div class="old">¥1,999.00</div><div class="dt">查看详情</div></div>
</section>

<section class="about">
<div class="ai"><svg viewBox="0 0 1568 1218" preserveAspectRatio="none"><rect width="1568" height="1218" fill="#1f1a1c"/><g filter="url(#b1)">
<path d="M560 0H985L860 330 780 430 740 790H720L680 430 600 280Z" fill="url(#g2)"/>
<path d="M0 0H370V520L280 510 0 350Z" fill="#36201f"/>
<path d="M150 10 190 20 190 300 150 290ZM225 110 255 130 255 370 225 360ZM295 230 315 240 315 440 295 430ZM335 280 355 290 355 500 335 490ZM15 0H95V250L15 220Z" fill="#141114"/>
<path d="M100 10 240 100M210 100 260 130M280 200 360 290M0 330 270 500M110 0 360 220" stroke="#6a5650" stroke-width="7" fill="none" opacity=".7"/>
<path d="M0 350 370 560 360 880 260 1010 0 1010Z" fill="#232b27"/>
<path d="M60 430 280 545 280 590 60 480ZM0 390 60 430 60 520 0 490Z" fill="#555e4f"/>
<path d="M60 520 250 610 250 1000 60 1000Z" fill="#1a201d"/>
<path d="M170 560H195V1000H170ZM80 520H105V1000H80Z" fill="#34403a"/>
<rect x="280" y="590" width="80" height="290" fill="#55625c"/>
<rect x="300" y="635" width="50" height="50" fill="#d8dce0"/>
<rect x="0" y="435" width="58" height="78" fill="#b5a63c"/>
<path d="M370 0H480L470 360 500 480 460 680 370 700Z" fill="#222d33"/>
<path d="M390 70H440V300H390ZM395 380H430V560H395Z" fill="#6a8a96" opacity=".35"/>
<path d="M370 320 385 60 450 50 470 120" stroke="#17161a" stroke-width="10" fill="none"/><rect x="445" y="140" width="30" height="100" fill="#1c1b1e"/>
<rect x="360" y="330" width="18" height="530" fill="#17161a"/>
<path d="M470 0H560L600 280 630 380 590 520 560 640 500 520 470 360Z" fill="#d8bc98"/>
<path d="M490 0H540V220L490 220Z" fill="#e6d3b6"/>
<path d="M480 130H540M480 175H540M490 60H530M490 220H540M490 340H540M500 420H540" stroke="#8a7a6a" stroke-width="7"/>
<path d="M555 40 600 280 610 360 580 420 550 240Z" fill="#d5a276"/>
<path d="M550 400 590 380 590 560 550 560ZM515 560 560 600 555 880 480 870Z" fill="#a8957c"/>
<path d="M460 480 520 560 490 880 440 860Z" fill="#28282a"/>
<path d="M590 500 640 380 690 440 690 830 590 900Z" fill="#1b1a1c"/>
<path d="M650 430 685 450 685 620 650 600Z" fill="#a86a4a"/><path d="M620 380 650 375 650 440 625 450Z" fill="#66808e"/>
<rect x="430" y="730" width="115" height="70" fill="#1a1214"/><rect x="480" y="780" width="70" height="30" fill="#221a1c"/>
<rect x="455" y="748" width="55" height="14" fill="#c9c1c0"/>
<rect x="378" y="690" width="95" height="25" fill="#8aa8a0"/><path d="M380 660 470 640 470 690 380 700Z" fill="#c7c9c4" opacity=".6"/>
<rect x="460" y="550" width="40" height="55" fill="#8ba2b0"/>
<rect x="480" y="800" width="80" height="100" fill="#a8ada4"/><rect x="640" y="830" width="16" height="80" fill="#d8cbb8"/>
<path d="M790 450 822 430 860 880 760 880 760 800Z" fill="#a8604c"/>
<path d="M810 470 860 330 862 880 820 880Z" fill="#d5bda8"/>
<path d="M760 560 785 560 785 800 760 780Z" fill="#cdb3a0"/><path d="M710 780 740 730 760 800 740 830Z" fill="#9f9088"/>
<path d="M985 0H1085V590L860 780 858 330 920 130Z" fill="#85453a"/>
<path d="M1000 0H1060V200L880 520 890 360Z" fill="#94503f"/>
<path d="M1040 0 880 460M1060 160 900 540M1070 300 920 620M1075 400 920 660M1080 500 940 700M1020 0 870 380M1082 60 890 500M1084 240 905 580" stroke="#3a1d19" stroke-width="9"/>
<path d="M860 340H890V395H860ZM858 435H892V480H858ZM858 515H888V555H858ZM858 620H892V650H858ZM905 315H930V350H905ZM905 430H935V455H905ZM945 215H975V255H945ZM945 350H975V380H945ZM945 495H975V520H945ZM905 555H935V575H905ZM1015 375H1055V410H1015Z" fill="#15181c"/>
<path d="M860 790 1085 595 1090 935 860 880Z" fill="#181618"/>
<path d="M860 780 1085 575 1085 605 860 810Z" fill="#3c4238"/>
<path d="M880 800V880M920 770V890M960 740V900M1000 700V910M1040 670V925" stroke="#302c2c" stroke-width="6"/>
<path d="M1085 0H1110V140L1085 190ZM1085 190 1240 80V600L1085 600Z" fill="#b88a6c" opacity=".9"/>
<path d="M1100 200 1140 165V570L1100 590Z" fill="#2d3a44"/><path d="M1200 400 1240 370V540L1200 560Z" fill="#2a3238"/>
<path d="M1100 0H1240V70L1100 150Z" fill="#34424a"/>
<path d="M1145 160 1195 30 1240 30V60L1180 170V560L1145 580Z" fill="#161416"/>
<path d="M1085 600 1250 590 1250 960 1100 960Z" fill="#8c6448"/><path d="M1100 640 1160 620 1160 940 1100 940ZM1175 640 1250 620 1250 870 1175 880Z" fill="#2b3a38"/>
<rect x="1200" y="740" width="50" height="30" fill="#e2e4e4"/><ellipse cx="1205" cy="760" rx="12" ry="12" fill="#e8c98a"/>
<path d="M1100 880H1230V945H1100Z" fill="#1a1c1c"/><rect x="1135" y="930" width="135" height="40" fill="#101010"/>
<path d="M1240 0H1568V265L1240 510Z" fill="#78352a"/>
<path d="M1285 0H1310V80L1285 110ZM1350 0H1380V100L1350 130ZM1440 60 1490 20V300L1440 340ZM1375 130H1420V390L1375 420ZM1330 200 1360 190V410L1330 430ZM1285 250H1310V450L1285 470Z" fill="#1c1618"/>
<path d="M1510 0H1568V230L1510 280Z" fill="#17181a"/>
<path d="M1240 190 1490 0M1240 215 1510 20" stroke="#7a5a42" stroke-width="6"/>
<path d="M1240 515 1568 290 1568 1010 1265 975 1250 600Z" fill="#d6ccae"/>
<path d="M1240 520 1568 290 1568 340 1240 575Z" fill="#e6dcbe"/><path d="M1240 580 1568 380 1568 420 1250 620Z" fill="#bcae88"/>
<path d="M1330 620 1420 590 1420 690 1330 720ZM1520 530 1568 510 1568 620 1520 640Z" fill="#b59a60"/>
<path d="M1315 740 1345 750 1345 985 1315 975ZM1378 735 1425 720 1425 985 1378 980ZM1538 700 1568 690 1568 1000 1538 1000Z" fill="#1d211f"/>
<path d="M1425 720 1480 700 1480 1000 1425 1000ZM1482 680 1538 660 1538 1005 1490 1005Z" fill="#e2d9bd"/>
<path d="M1345 680 1420 660 1420 690 1345 720ZM1440 660 1568 610 1568 660 1440 700Z" fill="#efe7cc"/>
<path d="M645 920 760 890 830 890 860 905 1568 1190 1568 1218H280Z" fill="url(#g3)"/>
<path d="M660 915 280 1218 220 1218 222 1060 280 1010 560 925Z" fill="#3d4a50"/>
<path d="M830 895 1100 960 1568 1040 1568 1175 1400 1125 860 905Z" fill="#5f7f8c"/>
<path d="M1080 985 1568 1045 1568 1105 1370 1085Z" fill="#7892a0"/><path d="M1380 1092 1568 1088 1568 1100 1430 1105Z" fill="#dde3d8"/>
<path d="M860 905 1568 1195" stroke="#13181c" stroke-width="9"/><path d="M665 918 280 1218" stroke="#15191c" stroke-width="10"/>
<ellipse cx="400" cy="925" rx="112" ry="68" fill="#1a1d1d"/><path d="M290 965H500V990L440 1070 290 1075Z" fill="#29302c"/>
<rect x="330" y="960" width="50" height="145" fill="#3a3a2e"/>
<path d="M0 840 65 820 125 880 130 1010H0Z" fill="#121210"/>
<rect x="682" y="855" width="42" height="55" rx="5" fill="#233a55"/><rect x="690" y="855" width="28" height="20" fill="#e8ecf0"/>
<rect x="758" y="842" width="30" height="44" fill="#dcdcd8"/><rect x="725" y="865" width="26" height="20" fill="#b8b4a8"/>
<rect x="584" y="880" width="14" height="70" fill="#24282a"/><rect x="875" y="860" width="16" height="45" fill="#7e8e96"/><rect x="820" y="865" width="18" height="30" fill="#b08070"/>
<path d="M995 790V950M1050 870V950" stroke="#171819" stroke-width="6"/>
</g><path d="M645 920 760 890 830 890 860 905 1568 1190 1568 1218H280Z" filter="url(#tx)" opacity=".18"/></svg></div>
<div class="yr"><b>10+</b><span>年行业经验</span></div>
<h2>关于我们</h2>
<div class="ap" style="top:149px">我们是一家专业的网页设计与开发公司，拥有10年以上的行业经验，为众多企业提供了高质量的网站解决方案。</div>
<div class="ap" style="top:213px">我们的团队由资深的设计师、开发工程师和营销专家组成，致力于为客户创造独特、高效的在线体验。</div>
<div class="ft" style="left:656px;top:285px"><u><svg class="ic" width="16" height="16"><use href="#ck"/></svg></u><b>专业团队</b><span>资深设计师和开发工程师</span></div>
<div class="ft" style="left:968px;top:285px"><u><svg class="ic" width="16" height="16"><use href="#ck"/></svg></u><b>创新设计</b><span>独特的设计理念</span></div>
<div class="ft" style="left:656px;top:345px"><u><svg class="ic" width="16" height="16"><use href="#ck"/></svg></u><b>优质服务</b><span>7x24小时技术支持</span></div>
<div class="ft" style="left:968px;top:345px"><u><svg class="ic" width="16" height="16"><use href="#ck"/></svg></u><b>合理价格</b><span>高性价比解决方案</span></div>
<div class="lnk" style="left:656px;top:413px">了解更多<svg class="ic" width="14" height="16"><use href="#ar"/></svg></div>
</section>

<section class="tes">
<div class="st" style="top:64px">客户评价</div>
<div class="ss" style="top:116px">听听我们的客户怎么说</div>
<div class="tc" style="left:16px"><div class="rate"><svg width="15.75"><use href="#s"/></svg><svg width="15.75"><use href="#s"/></svg><svg width="15.75"><use href="#s"/></svg><svg width="15.75"><use href="#s"/></svg><svg width="15.75"><use href="#s"/></svg></div>
<p>"非常专业的团队，设计出来的网站超出了我们的预期。服务态度也很好，有问题及时解决，强烈推荐！"</p>
<div class="av" style="top:160px"><svg viewBox="0 0 48 48"><defs><linearGradient id="a1" x1="0" y1="0" x2="0" y2="1"><stop offset="0" stop-color="#a9c8de"/><stop offset=".45" stop-color="#dde6ea"/><stop offset=".72" stop-color="#f0dfd2"/><stop offset="1" stop-color="#c9cfd2"/></linearGradient></defs><rect width="48" height="48" fill="url(#a1)"/><path d="M0 38 12 36 24 38 36 36 48 38V48H0Z" fill="#98a4aa" opacity=".7"/></svg></div><b style="top:162px">张三</b><span style="top:186px">某科技公司CEO</span></div>
<div class="tc" style="left:440px"><div class="rate"><svg width="15.75"><use href="#s"/></svg><svg width="15.75"><use href="#s"/></svg><svg width="15.75"><use href="#s"/></svg><svg width="15.75"><use href="#s"/></svg><svg width="15.75"><use href="#h"/></svg></div>
<p>"合作非常愉快，网站设计得很漂亮，功能也很完善。团队的响应速度很快，值得信赖！"</p>
<div class="av" style="top:136px"><svg viewBox="0 0 48 48"><rect width="48" height="48" fill="#a9c9cf"/><ellipse cx="14" cy="10" rx="14" ry="9" fill="#c9dcd8"/><ellipse cx="32" cy="22" rx="14" ry="7" fill="#d7e2da"/><path d="M0 30 48 26V48H0Z" fill="#c1b7a4"/><path d="M6 36 18 32 22 48H8ZM30 34 42 36 40 48H28Z" fill="#8a5f50"/></svg></div><b style="top:138px">李四</b><span style="top:162px">某电商公司运营总监</span></div>
<div class="tc" style="left:864px"><div class="rate"><svg width="15.75"><use href="#s"/></svg><svg width="15.75"><use href="#s"/></svg><svg width="15.75"><use href="#s"/></svg><svg width="15.75"><use href="#s"/></svg><svg width="15.75"><use href="#e"/></svg></div>
<p>"网站上线后效果很好，流量和转化率都有明显提升。感谢团队的专业服务！"</p>
<div class="av" style="top:136px"><svg viewBox="0 0 48 48"><rect width="48" height="48" fill="#f4f3f1"/><path d="M0 18C2 34 10 44 26 46L10 48H0Z" fill="#7a5340"/><path d="M2 26C8 42 26 44 44 28L30 46 14 46Z" fill="#fafafa"/><ellipse cx="21" cy="15" rx="19" ry="18" fill="#8c1a25"/><circle cx="14" cy="12" r="5" fill="#b22a35"/><circle cx="26" cy="9" r="4" fill="#b22a35"/><circle cx="22" cy="21" r="5" fill="#a81f2e"/><circle cx="10" cy="22" r="4" fill="#6e1019"/><circle cx="31" cy="18" r="4" fill="#9d2330"/></svg></div><b style="top:138px">王五</b><span style="top:162px">某教育机构负责人</span></div>
</section>

<section class="con">
<h2>联系我们</h2>
<div class="abs" style="left:16px;top:206px;opacity:.9">如有任何问题或需求，欢迎随时联系我们，我们将竭诚为您服务</div>
<div class="ci" style="top:258px"><svg class="ic" width="12" height="16"><use href="#pin"/></svg></div><div class="cb" style="top:255px">公司地址</div><div class="cv" style="top:279px">北京市朝阳区某某大厦12层</div>
<div class="ci" style="top:322px"><svg class="ic" width="16" height="16"><use href="#ph"/></svg></div><div class="cb" style="top:319px">联系电话</div><div class="cv" style="top:343px;letter-spacing:.55px">400-123-4567</div>
<div class="ci" style="top:386px"><svg class="ic" width="16" height="16"><use href="#env"/></svg></div><div class="cb" style="top:383px">电子邮箱</div><div class="cv" style="top:407px;letter-spacing:.25px">info@example.com</div>
<div class="form">
<h3>发送消息</h3>
<label style="left:24px;top:68px">姓名</label><input style="left:24px;top:92px;width:272px;height:42px">
<label style="left:312px;top:68px">邮箱</label><input style="left:312px;top:92px;width:272px;height:42px">
<label style="left:24px;top:150px">主题</label><input style="left:24px;top:174px;width:560px;height:42px">
<label style="left:24px;top:232px">消息内容</label><textarea style="left:24px;top:256px;width:560px;height:114px"></textarea>
<div class="go">发送消息</div>
</div>
</section>

<footer>
<div class="abs" style="left:16px;top:46px;height:36px;display:flex;align-items:center;font-size:24px;line-height:36px;font-weight:700;color:#fff;letter-spacing:.45px"><svg class="ic" width="24" height="24" style="margin-right:8px"><use href="#rocket"/></svg>AI-Template</div>
<div class="abs" style="left:16px;top:96px;width:288px">专业的网页设计解决方案，为您的企业打造独特的在线形象</div>
<div class="abs" style="left:16px;top:164px;display:flex;gap:16px;align-items:center;height:28px">
<svg class="ic" width="22.5" height="20" viewBox="0 0 576 512"><path d="M385.2 167.6c6.4 0 12.6.3 18.8 1.1C387.4 90.3 303.3 32 207.7 32 100.5 32 13 104.8 13 197.4c0 53.4 29.3 97.5 77.9 131.6l-19.3 58.6 68-34.1c24.4 4.8 43.8 9.7 68.2 9.7 6.2 0 12.1-.3 18.3-.8-4-12.9-6.2-26.6-6.2-40.8-.1-84.9 72.9-154 165.3-154zm-104.5-52.9c14.5 0 24.2 9.7 24.2 24.4 0 14.5-9.7 24.2-24.2 24.2-14.8 0-29.3-9.7-29.3-24.2.1-14.7 14.6-24.4 29.3-24.4zm-136.4 48.6c-14.5 0-29.3-9.7-29.3-24.2 0-14.8 14.8-24.4 29.3-24.4 14.8 0 24.4 9.7 24.4 24.4 0 14.6-9.6 24.2-24.4 24.2zM563 319.4c0-77.9-77.9-141.3-165.4-141.3-92.7 0-165.4 63.4-165.4 141.3S305 460.7 397.6 460.7c19.3 0 38.9-5.1 58.6-9.9l53.4 29.3-14.8-48.6C534 402.1 563 363.2 563 319.4zm-219.1-24.5c-9.7 0-19.3-9.7-19.3-19.6 0-9.7 9.7-19.3 19.3-19.3 14.8 0 24.4 9.7 24.4 19.3 0 10-9.7 19.6-24.4 19.6zm107.1 0c-9.7 0-19.3-9.7-19.3-19.6 0-9.7 9.7-19.3 19.3-19.3 14.5 0 24.4 9.7 24.4 19.3.1 10-9.9 19.6-24.4 19.6z"/></svg>
<svg class="ic" width="20" height="20" viewBox="0 0 512 512"><path d="M407 177.6c7.6-24-13.4-46.8-37.4-41.7-22 4.8-28.8-28.1-7.1-32.8 50.1-10.9 92.3 37.1 76.5 84.8-6.8 21.2-38.8 10.8-32-10.3zM214.8 446.7C108.5 446.7 0 395.3 0 310.4c0-44.3 28-95.4 76.3-143.7C176 67 279.5 65.8 249.9 161c-4 13.1 12.3 5.7 12.3 6 79.5-33.6 140.5-16.8 114 51.4-3.7 9.4 1.1 10.9 8.3 13.1 135.7 42.3 34.8 215.2-169.7 215.2zm143.7-146.3c-5.4-55.7-78.5-94-163.4-85.7-84.8 8.6-148.8 60.3-143.4 116s78.5 94 163.4 85.7c84.8-8.6 148.8-60.3 143.4-116zM347.9 35.1c-25.9 5.6-16.8 43.7 8.3 38.3 72.3-15.2 134.8 52.8 111.7 124-7.4 24.2 29.1 37 37.4 12 31.9-99.8-55.1-195.9-157.4-174.3zm-78.5 311c-17.1 38.8-66.8 60-109.1 46.3-40.8-13.1-58-53.4-40.3-89.7 17.7-35.4 63.1-55.4 103.4-45.1 42 10.8 63.1 50.2 46 88.5zm-86.3-30c-12.9-5.4-30 .3-38 12.9-8.3 12.9-4.3 28 8.6 34 13.1 6 30.8.3 39.1-12.9 8-13.1 3.7-28.3-9.7-34zm32.6-13.4c-5.1-1.7-11.4.6-14.3 5.4-2.9 5.1-1.4 10.6 3.7 12.9 5.1 2 11.7-.3 14.6-5.4 2.8-5.2 1.1-10.9-4-12.9z"/></svg>
<svg class="ic" width="17.5" height="20" viewBox="0 0 448 512"><path d="M100.28 448H7.4V148.9h92.88zM53.79 108.1C24.09 108.1 0 83.5 0 53.8a53.79 53.79 0 0 1 107.58 0c0 29.7-24.1 54.3-53.79 54.3zM447.9 448h-92.68V302.4c0-34.7-.7-79.2-48.29-79.2-48.29 0-55.69 37.7-55.69 76.7V448h-92.78V148.9h89.08v40.8h1.3c12.4-23.5 42.69-48.3 87.88-48.3 94 0 111.28 61.9 111.28 142.3V448z"/></svg>
<svg class="ic" width="12.5" height="20" viewBox="0 0 320 512"><path d="M279.14 288l14.22-92.66h-88.91v-60.13c0-25.35 12.42-50.06 52.24-50.06h40.42V6.26S260.43 0 225.36 0c-73.22 0-121.08 44.38-121.08 124.72v70.62H22.89V288h81.39v224h100.17V288z"/></svg>
</div>
<h4 style="left:336px">快速链接</h4>
<ul class="fl" style="left:336px"><li>首页</li><li>关于我们</li><li>服务项目</li><li>产品中心</li><li>联系我们</li></ul>
<h4 style="left:656px">服务项目</h4>
<ul class="fl" style="left:656px"><li>网页设计</li><li>前端开发</li><li>后端开发</li><li>SEO优化</li><li>电商解决方案</li></ul>
<h4 style="left:976px">联系方式</h4>
<ul class="fl" style="left:976px">
<li><svg class="ic" width="12" height="16" style="margin-right:9px"><use href="#pin"/></svg>北京市朝阳区某某大厦12层</li>
<li style="letter-spacing:.55px"><svg class="ic" width="16" height="16" style="margin-right:9px"><use href="#ph"/></svg>400-123-4567</li>
<li style="letter-spacing:.25px"><svg class="ic" width="16" height="16" style="margin-right:12px"><use href="#env"/></svg>info@example.com</li>
<li style="letter-spacing:.5px"><svg class="ic" width="16" height="16" style="margin-right:10px" viewBox="0 0 512 512"><path d="M256 8C119 8 8 119 8 256s111 248 248 248 248-111 248-248S393 8 256 8zm0 448c-110.5 0-200-89.5-200-200S145.5 56 256 56s200 89.5 200 200-89.5 200-200 200zm61.8-104.4l-84.9-61.7c-3.1-2.3-4.9-5.9-4.9-9.7V116c0-6.6 5.4-12 12-12h32c6.6 0 12 5.4 12 12v141.7l66.8 48.6c5.4 3.9 6.5 11.4 2.6 16.8L334.6 349c-3.9 5.3-11.4 6.5-16.8 2.6z"/></svg>周一至周五 9:00-18:00</li>
</ul>
<div class="abs" style="left:0;top:309px;width:1280px;text-align:center;letter-spacing:.35px">© 2024 AI-Template. All rights reserved.</div>
</footer>
</body></html>
